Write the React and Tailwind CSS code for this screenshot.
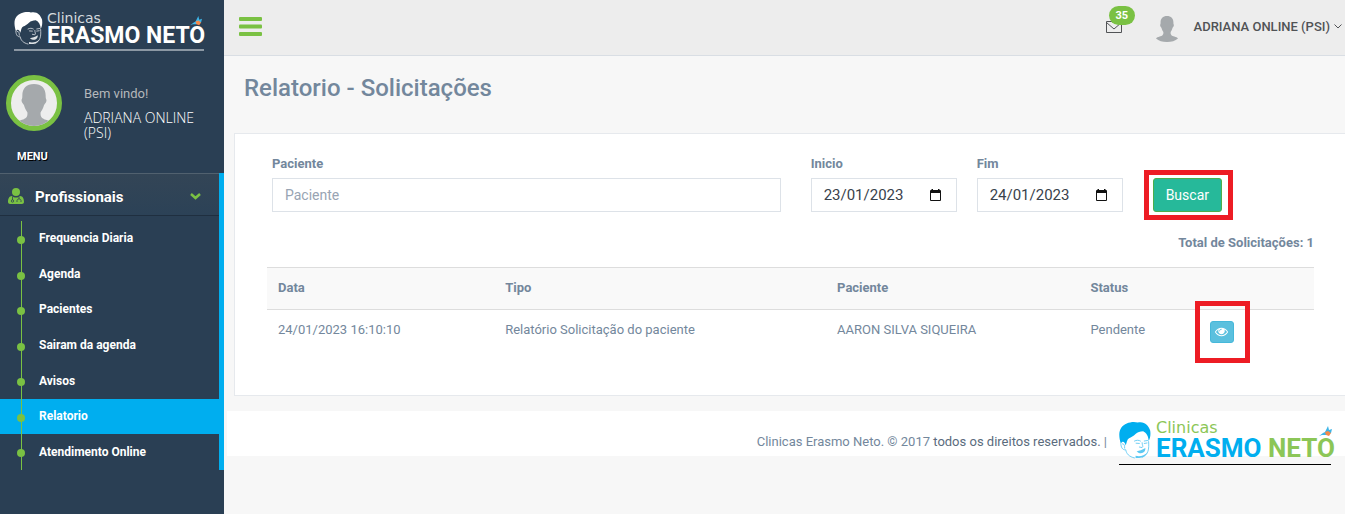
const items = ['Frequencia Diaria', 'Agenda', 'Pacientes', 'Sairam da agenda', 'Avisos', 'Relatorio', 'Atendimento Online'];

function Face({ className, hair, skin, line }) {
  return (
    <svg viewBox="0 0 29 34" className={className} aria-hidden="true">
      <path d="M4 18L6 27L11 32L18 33.500L24 31L27 26L27.500 14L20 7L8 14Z" fill={skin} />
      <path d="M1.500 20C0 15 -1 9 2 5C5 1 12 -1 17 .5C23 -1 27 3 28.500 8C29 12 28.500 15 27 17.500C27 13 25 10 22 8.500C19 9 17 9 15 11C13 13 11 14 9 15C7 16 7 19 6 21.500C5 18 3 17 1.500 20Z" fill={hair} />
      <path d="M1.500 20C1.500 23 3 26 6 25.500C6.500 29 9 32 14 33M3 20C5 20 5 22 5 24M14 17.500C16 16.500 18 16.500 19.500 17.500M23 17.500L26 17M15.500 19.500L18.500 19.700M23 19.700L25.500 19.300M21 19C21 21.500 22.500 22.500 21 23.500L18.500 23M27 18C27.500 25 27 30 21 32.500" fill="none" stroke={line} strokeWidth="0.800" strokeLinecap="round" />
      <path d="M16 27C18.500 26.500 21 26 24 24C24.500 28 20 30.500 16 27Z" fill={line} />
      <path d="M15 33C20 33.500 24 32 26 28C23 31 19 32 15 31Z" fill={line} />
    </svg>
  );
}

function Bird({ className }) {
  return (
    <svg viewBox="0 0 14 12" className={className} aria-hidden="true">
      <path d="M0 10L4 7L6 6L9 0L10 4L13 3L12 7L7 9L3 9Z" fill="#3db5e8" />
      <path d="M6 6L9 5L12 7L10 10L7 9Z" fill="#f58a4b" />
    </svg>
  );
}

function Silhouette({ className }) {
  return (
    <svg viewBox="0 0 48 52" preserveAspectRatio="none" className={className} aria-hidden="true">
      <path d="M24 0C33 0 38 5 38 13C38 15 38 16 39 18C39 21 37 22 36 24C35 28 33 30 32 32C31 38 35 40 40 41C44 42 46 43 48 45C42 50 34 52 24 52C14 52 6 50 0 45C2 43 4 42 8 41C13 40 17 38 16 32C15 30 13 28 12 24C11 22 9 21 9 18C10 16 10 15 10 13C10 5 15 0 24 0Z" fill="#a5a9ac" />
    </svg>
  );
}

function Doctor({ className }) {
  return (
    <svg viewBox="0 0 16 16" className={className} aria-hidden="true">
      <circle cx="8" cy="4" r="4" fill="#7ac143" />
      <path d="M4 8C1 8 0 11 0 14C0 15 1 16 2 16H14C15 16 16 15 16 14C16 11 15 8 12 8C10 10 6 10 4 8Z" fill="#7ac143" />
      <path d="M4.500 8.500V12M11 9V11M9 14V12.500C9 10.500 13 10.500 13 12.500V14" fill="none" stroke="#2f4357" strokeWidth="0.800" />
      <circle cx="4.500" cy="13" r="1.200" fill="none" stroke="#2f4357" strokeWidth="0.800" />
    </svg>
  );
}

function Eye({ className }) {
  return (
    <svg viewBox="0 0 1792 1792" className={className} fill="currentColor" aria-hidden="true">
      <path d="M1664 960q-152-236-381-353 61 104 61 225 0 185-131.500 316.500t-316.500 131.500-316.500-131.500-131.500-316.500q0-121 61-225-229 117-381 353 133 205 333.500 326.500t434.500 121.500 434.500-121.500 333.500-326.500zm-720-384q0-20-14-34t-34-14q-125 0-214.500 89.500t-89.500 214.500q0 20 14 34t34 14 34-14 14-34q0-86 61-147t147-61q20 0 34-14t14-34zm848 384q0 34-20 69-140 230-376.500 368.500t-499.500 138.500-499.500-139-376.500-368q-20-35-20-69t20-69q140-229 376.500-368t499.500-139 499.500 139 376.500 368q20 35 20 69z" />
    </svg>
  );
}

function Calendar() {
  return (
    <svg viewBox="0 0 11 12" className="h-3 w-[11px]" aria-hidden="true">
      <path d="M1.500 0h1.500v1h5V0h1.500v1H10a1 1 0 0 1 1 1v9a1 1 0 0 1-1 1H1a1 1 0 0 1-1-1V2a1 1 0 0 1 1-1h.5ZM1 4v7h9V4Z" fill="#111" fillRule="evenodd" />
    </svg>
  );
}

function DateField({ id, label, value }) {
  return (
    <div className="w-[146px]">
      <label htmlFor={id} className="block font-bold leading-5">{label}</label>
      <div className="mt-1 flex h-[34px] items-center border border-[#dde2e8] bg-white pr-[15px] pl-3">
        <input id={id} defaultValue={value} className="w-full min-w-0 text-[15px] text-[#39424c] outline-none" />
        <button type="button" aria-label={'Abrir calendário: ' + label}><Calendar /></button>
      </div>
    </div>
  );
}

export default function App() {
  return (
    <div className="flex min-h-screen overflow-x-hidden bg-[#f7f7f7] font-['Roboto',sans-serif] text-[13px] text-[#73879c]">
      <aside className="w-[224px] shrink-0 bg-[#2a3f54] text-white">
        <a href="#inicio" className="mt-3 ml-[14px] block w-[190px] border-b-2 border-[#8c98a4] pb-1">
          <span className="flex h-[33px] items-start">
            <Face className="h-[33px] w-[29px] shrink-0" hair="#fff" skin="#2a3f54" line="#dfe3e6" />
            <span className="relative ml-1 block whitespace-nowrap">
              <span className="block font-['DejaVu_Sans',sans-serif] text-[14px] leading-3 text-[#d5dade]">Clinicas</span>
              <span className="block text-[23px] leading-6 font-bold">ERASMO NETO</span>
              <Bird className="absolute top-1 right-0.5 h-[11px] w-[13px]" />
            </span>
          </span>
        </a>
        <div className="mt-[24px] flex pl-[6px]">
          <span className="flex h-14 w-14 shrink-0 items-end justify-center overflow-hidden rounded-full border-[5px] border-[#7ac143] bg-[#ededed]">
            <Silhouette className="h-[46px] w-10 shrink-0 translate-y-1" />
          </span>
          <div className="ml-[22px] pt-[10px]">
            <p className="leading-[18px] text-[#b5b8bb]">Bem vindo!</p>
            <h2 className="mt-[7px] w-[120px] font-['Open_Sans',sans-serif] text-[14px] leading-[15px] font-light text-white">ADRIANA ONLINE (PSI)</h2>
          </div>
        </div>
        <h3 className="mt-[9px] pl-[17px] text-[11px] leading-4 font-bold [text-shadow:1px_1px_#000]">MENU</h3>
        <nav className="mt-2 border-r-[5px] border-[#00aeef]">
          <button type="button" className="flex h-[43px] w-full items-center border-t border-b border-t-[#51616f] border-b-[#1f2f40] bg-linear-to-b from-[#334556] to-[#2c4257] pt-[3px] pr-[18px] pl-2 text-[15px] font-bold [text-shadow:0_-1px_0_rgba(0,0,0,0.25)]">
            <Doctor className="h-4 w-4" />
            <span className="ml-[11px] flex-1 pt-[3px] text-left">Profissionais</span>
            <svg viewBox="0 0 11 7" className="h-[7px] w-[11px]" fill="none" stroke="#7ac143" strokeWidth="2.500" aria-hidden="true"><path d="M1 1L5.500 5L10 1" /></svg>
          </button>
          <ul className="mt-[5px] grid h-[249px] grid-rows-7 text-[12px] font-bold">
            {items.map((name) => (
              <li key={name} className={'relative ' + (name === 'Relatorio' ? 'bg-[#00aeef]' : '')}>
                <span className="absolute top-0 bottom-0 left-[21px] w-px bg-[#7ac143]" />
                <span className="absolute top-[15px] left-[17px] h-2 w-2 rounded-full bg-[#7ac143]" />
                <a href="#menu" className="flex h-full items-center pb-px pl-[39px]">{name}</a>
              </li>
            ))}
          </ul>
        </nav>
      </aside>
      <div className="min-w-0 flex-1">
        <header className="flex h-14 items-center justify-between border-b border-[#d9dee4] bg-[#ededed] pr-[3px] pb-0.5 pl-[15px]">
          <button type="button" aria-label="Menu">
            <svg viewBox="0 0 23 19" className="h-[19px] w-[23px]" fill="#7ac143" aria-hidden="true">
              <rect width="23" height="4" rx="1" />
              <rect y="7.500" width="23" height="4" rx="1" />
              <rect y="15" width="23" height="4" rx="1" />
            </svg>
          </button>
          <div className="flex items-center">
            <a href="#mensagens" aria-label="Mensagens" className="relative mr-[34px]">
              <svg viewBox="0 0 16 12" className="block h-3 w-4" fill="none" stroke="#515356" aria-hidden="true">
                <path d="M.5.5h15v11H.5ZM.5 1.500L8 8L15.500 1.500" />
              </svg>
              <span className="absolute bottom-2 left-[3px] rounded-full bg-[#7ac143] px-[7px] text-[11px] leading-[19px] font-bold text-white">35</span>
            </a>
            <button type="button" className="flex items-center font-medium text-[#515356]">
              <Silhouette className="mr-[16px] mt-1 h-[26px] w-[22px]" />
              ADRIANA ONLINE (PSI)
              <svg viewBox="0 0 8 5" className="ml-1 h-[5px] w-2" fill="none" stroke="#515356" aria-hidden="true"><path d="M.5.5L4 4L7.500.5" /></svg>
            </button>
          </div>
        </header>
        <main>
          <h1 className="pt-[16px] pl-5 text-[24px] leading-8 font-medium">Relatorio - Solicitações</h1>
          <section className="mt-[29px] ml-[10px] border-y border-l border-[#e6e9ed] bg-white pt-5 pr-[31px] pb-[41px] pl-8">
            <form className="flex items-end pr-[92px] pl-[5px]">
              <div className="min-w-0 flex-1">
                <label htmlFor="paciente" className="block font-bold leading-5">Paciente</label>
                <input id="paciente" placeholder="Paciente" className="mt-1 block h-[34px] w-full border border-[#dde2e8] px-3 text-[14px] outline-none placeholder:text-[#98a4b3]" />
              </div>
              <div className="ml-[30px] flex gap-5">
                <DateField id="inicio" label="Inicio" value="23/01/2023" />
                <DateField id="fim" label="Fim" value="24/01/2023" />
              </div>
              <div className="relative ml-[30px]">
                <button type="button" className="block h-[34px] rounded-[3px] border border-[#4cae4c] bg-[#26b99a] px-3 text-[14px] text-white">Buscar</button>
                <span className="pointer-events-none absolute -inset-y-2 -right-[11px] -left-[9px] border-[5px] border-[#ed1c24]" />
              </div>
            </form>
            <p className="mt-[21px] text-right leading-5 font-bold">Total de Solicitações: 1</p>
            <table className="mt-[14px] w-full table-fixed text-left">
              <colgroup>
                <col className="w-[21.7%]" />
                <col className="w-[31.7%]" />
                <col className="w-[24.2%]" />
                <col className="w-[11.4%]" />
                <col />
              </colgroup>
              <thead>
                <tr className="h-[42px] border-y border-[#ddd] bg-[#f9f9f9]">
                  <th className="pb-0.5 pl-[11px]">Data</th>
                  <th className="pb-0.5 pl-[11px]">Tipo</th>
                  <th className="pb-0.5 pl-[11px]">Paciente</th>
                  <th className="pb-0.5 pl-[11px]">Status</th>
                  <td />
                </tr>
              </thead>
              <tbody>
                <tr className="h-11 align-top">
                  <td className="pt-[10px] pl-[11px] leading-5">24/01/2023 16:10:10</td>
                  <td className="pt-[10px] pl-[11px] leading-5">Relatório Solicitação do paciente</td>
                  <td className="pt-[10px] pl-[11px] leading-5">AARON SILVA SIQUEIRA</td>
                  <td className="pt-[10px] pl-[11px] leading-5">Pendente</td>
                  <td className="pt-[11px] pl-[11px]">
                    <div className="relative w-6">
                      <button type="button" aria-label="Visualizar" className="flex h-[22px] w-6 items-center justify-center rounded-[3px] border border-[#46b8da] bg-[#5bc0de] pb-px text-white">
                        <Eye className="h-[13px] w-[13px]" />
                      </button>
                      <span className="pointer-events-none absolute -inset-y-5 -right-4 -left-[15px] border-[5px] border-[#ed1c24]" />
                    </div>
                  </td>
                </tr>
              </tbody>
            </table>
          </section>
        </main>
        <footer className="mt-[15px] ml-[3px] flex h-[45px] items-start justify-end bg-white pr-[14px]">
          <p className="mr-3 pt-[21px] leading-5">Clinicas Erasmo Neto. © 2017 <span className="text-[#5a6b7d]">todos os direitos reservados.</span> |</p>
          <a href="#clinica" className="mt-[11px] block w-[212px] border-b border-black pb-1 text-[#00aeef]">
            <span className="flex h-[38px] items-start">
              <Face className="h-[37px] w-[32px] shrink-0" hair="#00aeef" skin="#fff" line="#5cc8f2" />
              <span className="relative ml-[5px] block whitespace-nowrap">
                <span className="block font-['DejaVu_Sans',sans-serif] text-[16px] leading-3 text-[#8cc657]">Clinicas</span>
                <span className="block text-[26px] leading-7 font-bold">ERASMO <span className="text-[#8cc657]">NETO</span></span>
                <Bird className="absolute top-1 right-0.5 h-3 w-[14px]" />
              </span>
            </span>
          </a>
        </footer>
      </div>
    </div>
  );
}
